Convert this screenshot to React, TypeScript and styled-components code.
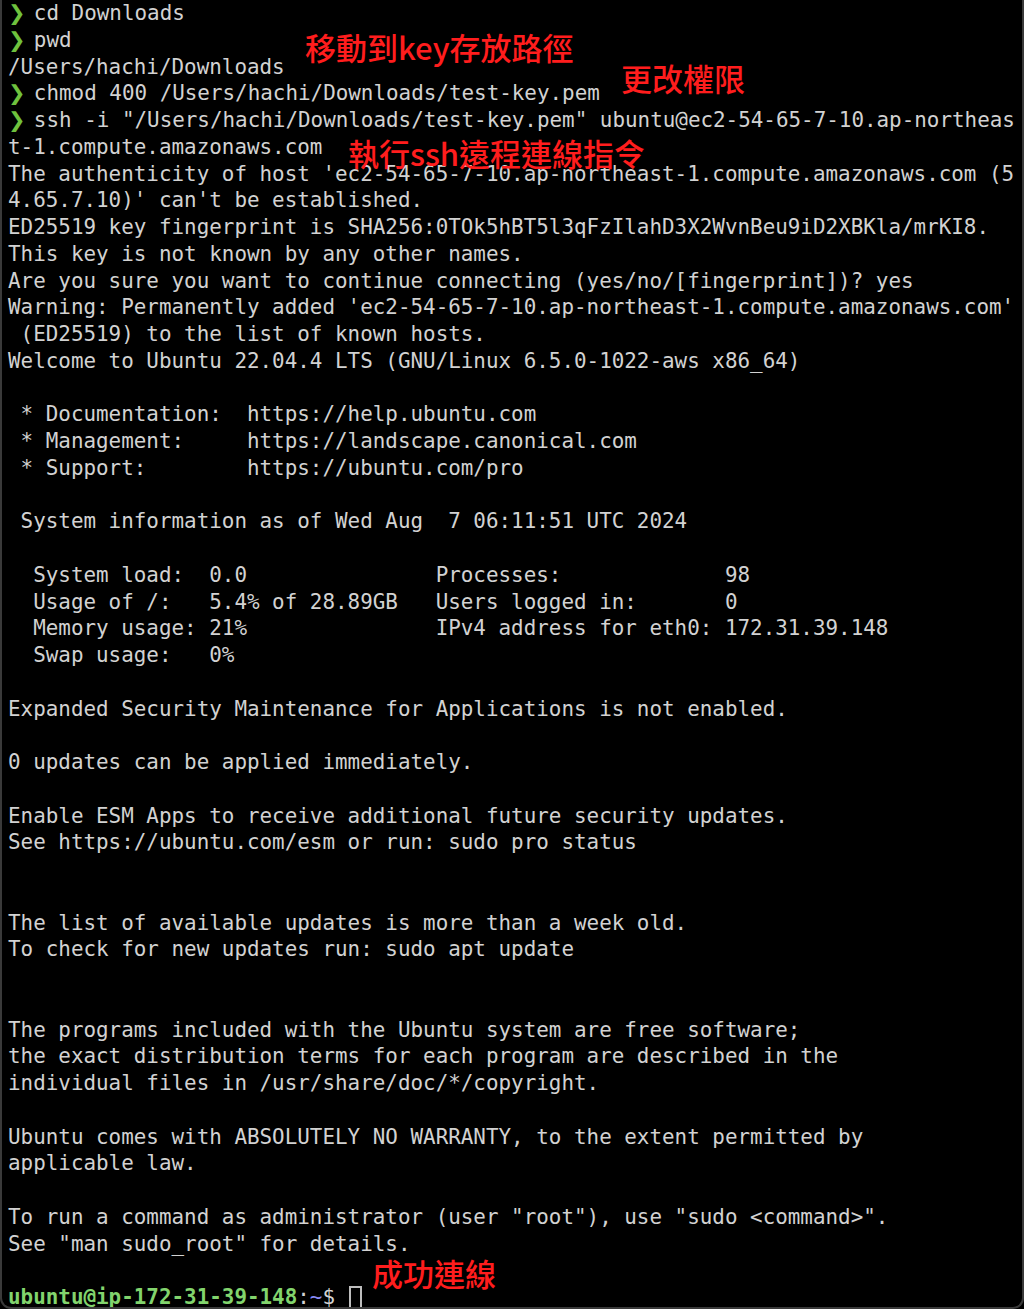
import React, { FC } from 'react';
import styled, { createGlobalStyle } from 'styled-components';

const GlobalStyle = createGlobalStyle`
  html, body {
    margin: 0;
    padding: 0;
    background: #000;
  }
`;

const FrameStyled = styled.div`
  position: relative;
  display: flex;
  flex-direction: column;
  box-sizing: border-box;
  width: 1024px;
  height: 1309px;
  overflow: hidden;
  background: #000;
  border: 2px solid #3a3a3a;
  border-top: none;
  border-radius: 0 0 11px 11px;
  padding: 0 0 0 6px;
  font-family: 'DejaVu Sans Mono', 'Liberation Mono', monospace;
  font-size: 20.9px;
  color: #d2d2d2;
`;

const LineStyled = styled.div`
  flex: none;
  height: 26.75px;
  line-height: 26.75px;
  white-space: pre;
`;

const ChevronStyled = styled.span`
  display: inline-block;
  width: 1ch;
  color: #6fc23e;
  font-family: 'DejaVu Sans', sans-serif;
  text-align: center;
`;

const HostStyled = styled.span`
  color: #82d46d;
  font-weight: bold;
`;

const TildeStyled = styled.span`
  color: #8a8af5;
`;

const CursorStyled = styled.span`
  display: inline-block;
  box-sizing: border-box;
  width: 13px;
  height: 26px;
  margin-left: 1px;
  vertical-align: -8px;
  border: 2px solid #bdbdbd;
`;

// red notes drawn over the terminal text
const NoteStyled = styled.div<{ $left: number; $top: number }>`
  position: absolute;
  left: ${(p) => p.$left}px;
  top: ${(p) => p.$top}px;
  color: #ff1d1d;
  font-family: 'Noto Sans CJK TC', 'Noto Sans', sans-serif;
  font-size: 31px;
  font-weight: 500;
  line-height: 32px;
  white-space: nowrap;
`;

const output: string[] = [
  'The authenticity of host \'ec2-54-65-7-10.ap-northeast-1.compute.amazonaws.com (5',
  '4.65.7.10)\' can\'t be established.',
  'ED25519 key fingerprint is SHA256:0TOk5hBT5l3qFzIlahD3X2WvnBeu9iD2XBKla/mrKI8.',
  'This key is not known by any other names.',
  'Are you sure you want to continue connecting (yes/no/[fingerprint])? yes',
  'Warning: Permanently added \'ec2-54-65-7-10.ap-northeast-1.compute.amazonaws.com\'',
  ' (ED25519) to the list of known hosts.',
  'Welcome to Ubuntu 22.04.4 LTS (GNU/Linux 6.5.0-1022-aws x86_64)',
  '',
  ' * Documentation:  https://help.ubuntu.com',
  ' * Management:     https://landscape.canonical.com',
  ' * Support:        https://ubuntu.com/pro',
  '',
  ' System information as of Wed Aug  7 06:11:51 UTC 2024',
  '',
  '  System load:  0.0               Processes:             98',
  '  Usage of /:   5.4% of 28.89GB   Users logged in:       0',
  '  Memory usage: 21%               IPv4 address for eth0: 172.31.39.148',
  '  Swap usage:   0%',
  '',
  'Expanded Security Maintenance for Applications is not enabled.',
  '',
  '0 updates can be applied immediately.',
  '',
  'Enable ESM Apps to receive additional future security updates.',
  'See https://ubuntu.com/esm or run: sudo pro status',
  '',
  '',
  'The list of available updates is more than a week old.',
  'To check for new updates run: sudo apt update',
  '',
  '',
  'The programs included with the Ubuntu system are free software;',
  'the exact distribution terms for each program are described in the',
  'individual files in /usr/share/doc/*/copyright.',
  '',
  'Ubuntu comes with ABSOLUTELY NO WARRANTY, to the extent permitted by',
  'applicable law.',
  '',
  'To run a command as administrator (user "root"), use "sudo <command>".',
  'See "man sudo_root" for details.',
  '',
];

const PromptLine: FC<{ text: string }> = ({ text }) => (
  <LineStyled>
    <ChevronStyled>❯</ChevronStyled> {text}
  </LineStyled>
);

export default function App() {
  return (
    <>
      <GlobalStyle />
      <FrameStyled>
        <PromptLine text="cd Downloads" />
        <PromptLine text="pwd" />
        <LineStyled>/Users/hachi/Downloads</LineStyled>
        <PromptLine text="chmod 400 /Users/hachi/Downloads/test-key.pem" />
        <PromptLine text={'ssh -i "/Users/hachi/Downloads/test-key.pem" ubuntu@ec2-54-65-7-10.ap-northeas'} />
        <LineStyled>t-1.compute.amazonaws.com</LineStyled>
        {output.map((line, i) => (
          <LineStyled key={i}>{line}</LineStyled>
        ))}
        <LineStyled>
          <HostStyled>ubuntu@ip-172-31-39-148</HostStyled>:<TildeStyled>~</TildeStyled>$ <CursorStyled />
        </LineStyled>

        <NoteStyled $left={303} $top={31}>移動到key存放路徑</NoteStyled>
        <NoteStyled $left={619} $top={62}>更改權限</NoteStyled>
        <NoteStyled $left={346} $top={137}>執行ssh遠程連線指令</NoteStyled>
        <NoteStyled $left={370} $top={1257}>成功連線</NoteStyled>
      </FrameStyled>
    </>
  );
}
